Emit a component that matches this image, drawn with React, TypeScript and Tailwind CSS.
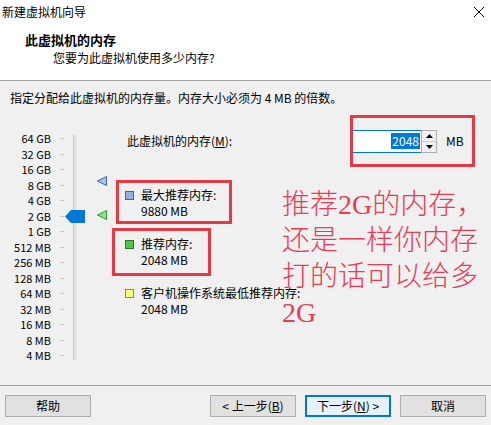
import React from "react";

function Square({ color, border }: { color: string; border: string }) {
  return (
    <div className="h-[16px] w-[9px] flex items-center shrink-0">
      <div className={`w-[9px] h-[9px] border ${color} ${border}`} />
    </div>
  );
}

function Item({ sq, title, value }: { sq: React.ReactNode; title: string; value: string }) {
  return (
    <div className="flex items-start">
      {sq}
      <div className="ml-[7px] leading-[16px] whitespace-nowrap">
        <div>{title}</div>
        <div>{value}</div>
      </div>
    </div>
  );
}

const labels = [
  "64 GB", "32 GB", "16 GB", "8 GB", "4 GB", "2 GB", "1 GB", "512 MB",
  "256 MB", "128 MB", "64 MB", "32 MB", "16 MB", "8 MB", "4 MB",
];

function Btn({ children, focus }: { children: React.ReactNode; focus?: boolean }) {
  return (
    <div
      className={`w-[86px] h-[22px] flex items-center justify-center border text-[12px] ${
        focus ? "border-[#0078d7] bg-[#e5f1fb] shadow-[inset_0_0_0_1px_#0078d7]" : "border-[#adadad] bg-[#e1e1e1]"
      }`}
    >
      {children}
    </div>
  );
}

export default function App() {
  return (
    <div className="w-[491px] h-[425px] bg-[#f0f0f0] flex flex-col text-[12px] text-black font-['Noto_Sans_CJK_SC',sans-serif] overflow-hidden">
      {/* header */}
      <div className="h-[81px] bg-white border-b border-[#a0a0a0] flex flex-col shrink-0">
        <div className="h-[24px] flex items-center justify-between pl-[2px] pr-[4px]">
          <span className="leading-[16px]">新建虚拟机向导</span>
          <svg width="12" height="12" viewBox="0 0 12 12" className="mr-[2px]">
            <path d="M1 1 L11 11 M11 1 L1 11" stroke="#000" strokeWidth="1" />
          </svg>
        </div>
        <div className="pl-[25px] mt-[8px] leading-[16px] font-bold text-[13px]">此虚拟机的内存</div>
        <div className="pl-[53px] mt-[2px] leading-[16px]">您要为此虚拟机使用多少内存?</div>
      </div>

      {/* body */}
      <div className="flex-1 flex flex-col pt-[9px]">
        <div className="pl-[10px] leading-[16px]">指定分配给此虚拟机的内存量。内存大小必须为 4 MB 的倍数。</div>
        <div className="relative flex mt-[9px]">
          {/* slider column */}
          <div className="relative w-[112px] pt-[16px] shrink-0">
            <div className="absolute left-[73px] top-[20px] h-[225px] w-[4px] bg-[#e4e4e4] border-l border-[#c4c4c4]" />
            {labels.map((l) => (
              <div key={l} className="h-[15.5px] flex items-center">
                <div className="w-[51px] text-right text-[11px] leading-[15.5px] whitespace-nowrap">{l}</div>
                <div className="ml-[9px] w-[4px] h-px bg-[#c8c8c8]" />
              </div>
            ))}
            <svg className="absolute left-[65px] top-[95px]" width="20" height="13" viewBox="0 0 20 13">
              <path d="M0 6.5 L6 0 L20 0 L20 13 L6 13 Z" fill="#0078d7" />
            </svg>
            <svg className="absolute left-[97px] top-[61px]" width="10" height="10" viewBox="0 0 10 10">
              <path d="M0.5 5 L9.5 0.5 L9.5 9.5 Z" fill="#a9c3ea" stroke="#3e62a8" strokeWidth="1" />
            </svg>
            <svg className="absolute left-[97px] top-[95px]" width="10" height="10" viewBox="0 0 10 10">
              <path d="M0.5 5 L9.5 0.5 L9.5 9.5 Z" fill="#8fe08f" stroke="#2e9a2e" strokeWidth="1" />
            </svg>
          </div>

          {/* right column */}
          <div className="flex-1 flex flex-col">
            <div className="h-[52px] flex items-center">
              <span className="pl-[15px] leading-[16px]">
                此虚拟机的内存(<span className="underline">M</span>):
              </span>
              <div className="ml-auto mr-[16px] w-[125px] h-[52px] border-[3px] border-[#e53945] flex items-center">
                <div className="w-[68px] h-[23px] bg-white border-y border-[#0078d7] flex items-center justify-end pr-[1px]">
                  <span className="bg-[#0078d7] text-white leading-[16px] px-[1px]">2048</span>
                </div>
                <div className="w-[16px] h-[23px] border border-[#adadad] bg-[#f0f0f0] flex flex-col">
                  <div className="flex-1 flex items-center justify-center border-b border-[#cfcfcf]">
                    <svg width="7" height="4" viewBox="0 0 7 4"><path d="M0 4 L3.5 0 L7 4 Z" fill="#000" /></svg>
                  </div>
                  <div className="flex-1 flex items-center justify-center">
                    <svg width="7" height="4" viewBox="0 0 7 4"><path d="M0 0 L3.5 4 L7 0 Z" fill="#000" /></svg>
                  </div>
                </div>
                <span className="ml-[9px] leading-[16px]">MB</span>
              </div>
            </div>

            <div className="mt-[13px] ml-[4px] w-[116px] h-[44px] border-[3px] border-[#e53945] pt-[4px] pl-[6px]">
              <Item sq={<Square color="bg-[#94b0dc]" border="border-[#44679f]" />} title="最大推荐内存:" value="9880 MB" />
            </div>

            <div className="mt-[4px] w-[99px] h-[48px] border-[3px] border-[#e53945] pt-[5px] pl-[10px]">
              <Item sq={<Square color="bg-[#4cc94c]" border="border-[#237a23]" />} title="推荐内存:" value="2048 MB" />
            </div>

            <div className="mt-[9px] pl-[13px]">
              <Item sq={<Square color="bg-[#ffff7a]" border="border-[#8f8f3a]" />} title="客户机操作系统最低推荐内存:" value="2048 MB" />
            </div>
          </div>

          {/* annotation */}
          <div className="absolute left-[282px] top-[72px] text-[28px] leading-[36px] font-light text-[#e63d55] font-['Liberation_Serif','Noto_Sans_CJK_SC',serif] whitespace-nowrap">
            <div>推荐2G的内存，</div>
            <div>还是一样你内存</div>
            <div>打的话可以给多</div>
            <div>2G</div>
          </div>
        </div>
      </div>

      {/* footer */}
      <div className="h-[40px] shrink-0 border-t border-[#a0a0a0] pt-[9px] px-[5px] flex items-start">
        <Btn>帮助</Btn>
        <div className="ml-auto flex gap-[9px]">
          <Btn>
            &lt; 上一步(<span className="underline">B</span>)
          </Btn>
          <Btn focus>
            下一步(<span className="underline">N</span>) &gt;
          </Btn>
          <Btn>取消</Btn>
        </div>
      </div>
    </div>
  );
}
